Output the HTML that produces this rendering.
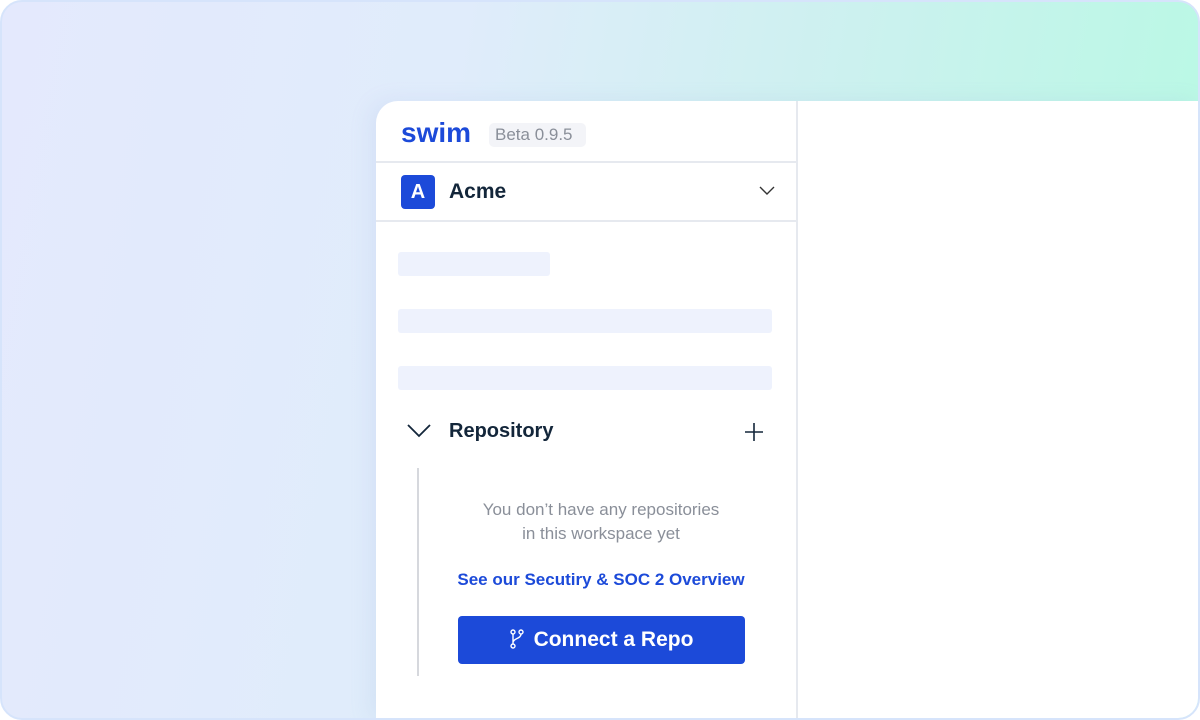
<!DOCTYPE html>
<html><head><style>
*{margin:0;padding:0;box-sizing:border-box}
body{width:1200px;height:720px;overflow:hidden;background:#fff;font-family:"Liberation Sans",sans-serif}
.frame{position:absolute;left:0;top:0;width:1200px;height:720px;border-radius:22px;border:2px solid #d6e4fb;overflow:hidden;
background:linear-gradient(100deg,#e4e9fd 0%,#e0ecfb 35%,#ccf1ef 65%,#b5fae2 100%)}
.panel{position:absolute;left:374px;top:99px;width:824px;height:617px;background:#fff;border-top-left-radius:22px;box-shadow:-6px 0 20px rgba(150,170,220,.15)}
.div{position:absolute;left:420px;top:0;width:2px;height:620px;background:#e6e9ef}
.hl{position:absolute;left:0;width:420px;height:2px;background:#e6e9ef}
.logo{position:absolute;left:25px;top:16px;font-size:28px;font-weight:bold;color:#1c4ad9;letter-spacing:0px}
.beta{position:absolute;left:113px;top:22px;height:24px;width:97px;background:#f3f4f8;border-radius:5px;color:#8a8f99;font-size:17px;line-height:24px;padding-left:6px}
.av{position:absolute;left:25px;top:74px;width:34px;height:34px;background:#1c4ad9;border-radius:4px;color:#fff;font-weight:bold;font-size:20px;text-align:center;line-height:34px}
.acme{position:absolute;left:73px;top:79px;font-size:21px;font-weight:bold;color:#13263a}
.sk{position:absolute;background:#eef2fd;border-radius:3px;height:24px}
.repo{position:absolute;left:73px;top:319px;font-size:20px;font-weight:bold;color:#13263a}
.vline{position:absolute;left:41px;top:367px;width:2px;height:208px;background:#d6d8dd}
.msg{position:absolute;left:60px;top:397px;width:330px;text-align:center;color:#8a8f99;font-size:17px;line-height:24px}
.link{position:absolute;left:60px;top:469px;width:330px;text-align:center;color:#1c4ad9;font-size:17px;font-weight:bold}
.btn{position:absolute;left:82px;top:515px;width:287px;height:48px;background:#1c4ad9;border-radius:4px;color:#fff;font-weight:bold;font-size:21px;line-height:48px;text-align:center}
</style></head><body>
<div class="frame">
<div class="panel">
<div class="div"></div>
<div class="hl" style="top:60px"></div>
<div class="hl" style="top:119px"></div>
<div class="logo">swim</div>
<div class="beta">Beta 0.9.5</div>
<div class="av">A</div>
<div class="acme">Acme</div>
<svg style="position:absolute;left:383px;top:85px" width="16" height="10"><path d="M1 1l7 7 7-7" fill="none" stroke="#333" stroke-width="1.4"/></svg>
<div class="sk" style="left:22px;top:151px;width:152px"></div>
<div class="sk" style="left:22px;top:208px;width:374px"></div>
<div class="sk" style="left:22px;top:265px;width:374px"></div>
<svg style="position:absolute;left:31px;top:323px" width="24" height="14"><path d="M1 1l11 11 11-11" fill="none" stroke="#13263a" stroke-width="1.8"/></svg>
<div class="repo">Repository</div>
<svg style="position:absolute;left:368px;top:321px" width="20" height="20"><path d="M10 1v18M1 10h18" stroke="#13263a" stroke-width="1.6"/></svg>
<div class="vline"></div>
<div class="msg">You don’t have any repositories<br>in this workspace yet</div>
<div class="link">See our Secutiry &amp; SOC 2 Overview</div>
<div class="btn"><svg width="14" height="20" style="vertical-align:-3px;margin-right:10px" viewBox="0 0 14 20"><g fill="none" stroke="#fff" stroke-width="1.4"><circle cx="3" cy="3" r="2"/><circle cx="11" cy="3" r="2"/><circle cx="3" cy="17" r="2"/><path d="M3 5v10M11 5c0 5-8 4-8 9"/></g></svg>Connect a Repo</div>
</div>
</div>
</body></html>
